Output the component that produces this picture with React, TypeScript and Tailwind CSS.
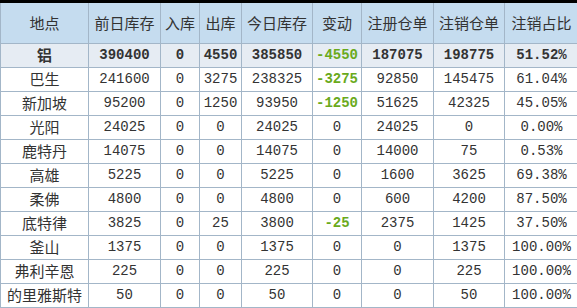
import React from "react";

const cols = ["地点", "前日库存", "入库", "出库", "今日库存", "变动", "注册仓单", "注销仓单", "注销占比"];

const rows: string[][] = [
  ["铝", "390400", "0", "4550", "385850", "-4550", "187075", "198775", "51.52%"],
  ["巴生", "241600", "0", "3275", "238325", "-3275", "92850", "145475", "61.04%"],
  ["新加坡", "95200", "0", "1250", "93950", "-1250", "51625", "42325", "45.05%"],
  ["光阳", "24025", "0", "0", "24025", "0", "24025", "0", "0.00%"],
  ["鹿特丹", "14075", "0", "0", "14075", "0", "14000", "75", "0.53%"],
  ["高雄", "5225", "0", "0", "5225", "0", "1600", "3625", "69.38%"],
  ["柔佛", "4800", "0", "0", "4800", "0", "600", "4200", "87.50%"],
  ["底特律", "3825", "0", "25", "3800", "-25", "2375", "1425", "37.50%"],
  ["釜山", "1375", "0", "0", "1375", "0", "0", "1375", "100.00%"],
  ["弗利辛恩", "225", "0", "0", "225", "0", "0", "225", "100.00%"],
  ["的里雅斯特", "50", "0", "0", "50", "0", "0", "50", "100.00%"],
];

const cjk = { fontFamily: '"Noto Sans CJK SC", "Noto Sans", sans-serif' };
const mono = { fontFamily: '"Liberation Mono", "Noto Sans CJK SC", monospace' };

export default function App() {
  return (
    <div className="w-[577px] h-[308px] bg-white overflow-hidden">
      <div className="h-[3px] bg-black" />
      <div className="grid grid-cols-[88px_72px_39px_42px_71px_49px_72px_71px_74px] w-[578px]">
        {cols.map((c, i) => (
          <div
            key={c}
            style={cjk}
            className="h-[41px] flex items-center justify-center bg-[#c5dcef] border-l border-b border-[#a3b6c8] text-[15px] text-[#333]"
          >
            {c}
          </div>
        ))}
        {rows.map((r, ri) =>
          r.map((v, ci) => {
            const bold = ri === 0;
            const neg = v.startsWith("-");
            return (
              <div
                key={ri + "-" + ci}
                style={ci === 0 ? cjk : mono}
                className={
                  "h-[24px] flex items-center justify-center border-l border-b border-[#a3b6c8] " +
                  (ci === 0 ? "text-[15px] " : "text-[14px] ") +
                  (bold ? "bg-[#e6ecf3] font-bold " : "bg-white ") +
                  (neg ? "text-[#6aaa1c] font-bold" : "text-[#333]")
                }
              >
                {v}
              </div>
            );
          })
        )}
      </div>
    </div>
  );
}
